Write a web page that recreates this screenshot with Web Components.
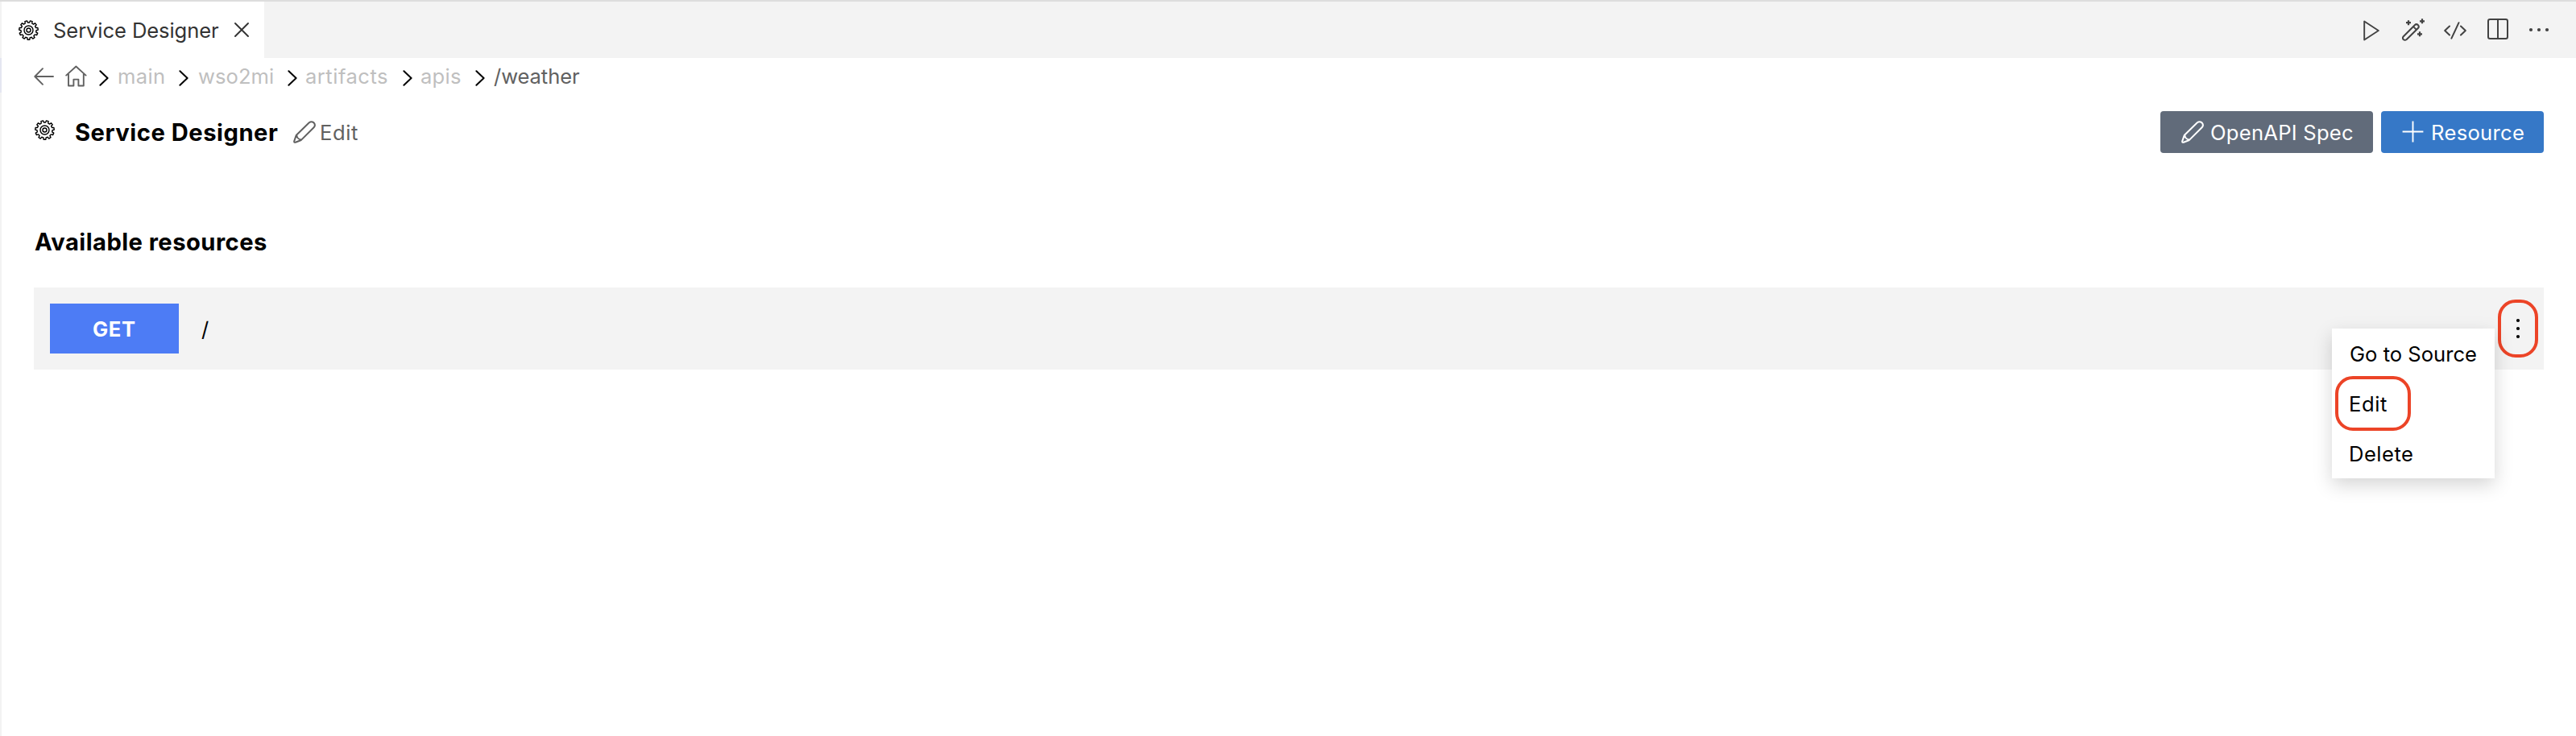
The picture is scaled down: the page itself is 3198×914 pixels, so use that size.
<!DOCTYPE html>
<html lang="en">
<head>
<meta charset="utf-8">
<title>Service Designer</title>
<style>
html,body{margin:0;height:100%;background:#fff;overflow:hidden}
body{font-family:Inter,"Liberation Sans",sans-serif}
</style>
</head>
<body>
<app-window></app-window>
<script>
// Builds the toothed outline of the gear icon.
function gearOutline(cx, cy, inner, outer, teeth) {
  const pts = [], step = 2 * Math.PI / teeth;
  for (let i = 0; i < teeth; i++) {
    const a = i * step - Math.PI / 2 + step / 2;
    for (const [k, r] of [[-.3, inner], [-.2, outer], [.2, outer], [.3, inner]])
      pts.push((cx + r * Math.cos(a + k * step)).toFixed(2) + ' ' + (cy + r * Math.sin(a + k * step)).toFixed(2));
  }
  return 'M' + pts.join('L') + 'Z';
}
// name: [width, height, stroke width, markup]
const ICONS = {
  gear: [25, 25, 1.4, `<path d="${gearOutline(12.5, 12.5, 9.5, 11.8, 11)}"/><circle cx="12.5" cy="12.5" r="5.5"/><circle cx="12.5" cy="12.5" r="2.5"/>`],
  close: [18, 18, 1.9, '<path d="M1 1L17 17M17 1L1 17"/>'],
  back: [25, 22, 1.9, '<path d="M24 11H1.5M11 1.2L1.3 11L11 20.8"/>'],
  home: [27, 27, 1.9, '<path d="M1.2 12.6L13.4 1.5L25.6 12.6M4 11V25.5H10.4V17.6H16.4V25.5H22.8V11"/>'],
  chevron: [12, 20, 2, '<path d="M1.4 1.2L10.6 10L1.4 18.8"/>'],
  pencil: [28, 28, 2, '<path d="M1.2 25.4L3.6 18.4Q3.8 17.9 4.2 17.5L19.8 2.3Q22.6 0 25.6 2.4Q28.2 5.4 25.6 8.3L10.2 23.6Q9.8 24 9.3 24.2L2.8 26.8Q.9 27.2 1.2 25.4ZM4.2 17.5Q4.8 23 10.2 23.6"/>'],
  plus: [27, 27, 1.9, '<path d="M13.5 .6V26.4M.6 13.5H26.4" stroke-linecap="butt"/>'],
  play: [20, 26, 1.9, '<path d="M1.2 1.5V24.5L18.8 13Z"/>'],
  wand: [28, 28, 2, '<path d="M1.8 22.2L16 8Q17.8 6.2 19.9 8.1Q21.7 10.2 19.9 12L5.7 26Q3.6 27.6 1.7 26Q.2 24.2 1.8 22.2ZM14.2 10.1L17.6 13.6"/><path d="M8 2.2V8.2M5 5.2H11M25 .3V6.3M22 3.3H28M22 16.3V22.3M19 19.3H25" stroke-width="2.2" stroke-linecap="butt"/>'],
  code: [28, 22, 2, '<path d="M7 5.5L1.2 11L7 16.5M21 5.5L26.8 11L21 16.5M18.5 1.2L9.4 20.6"/>'],
  split: [26, 26, 2, '<rect x="1" y="1" width="24" height="24" rx="2.3"/><path d="M13 1V25"/>'],
  more: [26, 6, 0, '<g fill="currentColor"><circle cx="3" cy="3" r="2.1"/><circle cx="13" cy="3" r="2.1"/><circle cx="23" cy="3" r="2.1"/></g>'],
  kebab: [6, 26, 0, '<g fill="currentColor"><circle cx="3" cy="3" r="2.1"/><circle cx="3" cy="13" r="2.1"/><circle cx="3" cy="23" r="2.1"/></g>']
};
customElements.define('ui-icon', class extends HTMLElement {
  connectedCallback() {
    const [w, h, sw, body] = ICONS[this.getAttribute('name')];
    this.attachShadow({mode: 'open'}).innerHTML =
      `<style>:host{display:block;flex:none;width:${w}px;height:${h}px}svg{display:block}</style>
       <svg width="${w}" height="${h}" viewBox="0 0 ${w} ${h}" fill="none" stroke="currentColor" stroke-width="${sw}" stroke-linecap="round" stroke-linejoin="round">${body}</svg>`;
  }
});
// A one-line label whose tracking is set so that its glyphs span exactly `width` pixels.
customElements.define('ui-label', class extends HTMLElement {
  connectedCallback() {
    const root = this.attachShadow({mode: 'open'});
    root.innerHTML = `<style>:host{display:block;flex:none;white-space:nowrap;line-height:32px}span{display:inline-block}</style><span><slot></slot></span>`;
    const text = this.getAttribute('text'), width = +this.getAttribute('width');
    this.textContent = text;
    const cs = getComputedStyle(this), g = document.createElement('canvas').getContext('2d');
    g.font = `${cs.fontWeight} ${cs.fontSize} ${cs.fontFamily}`;
    const m = g.measureText(text), ink = m.actualBoundingBoxRight + m.actualBoundingBoxLeft;
    this.style.width = width + 'px';
    const span = root.querySelector('span');
    span.style.marginLeft = m.actualBoundingBoxLeft + 'px';
    if (text.length > 1) span.style.letterSpacing = ((width - ink) / (text.length - 1)).toFixed(3) + 'px';
  }
});
customElements.define('ui-button', class extends HTMLElement {
  connectedCallback() {
    this.attachShadow({mode: 'open'}).innerHTML =
      `<style>:host{display:flex;box-sizing:border-box;height:52px;padding-left:26px;align-items:center;border-radius:4px;color:#fff;font-size:25.6px}</style><slot></slot>`;
  }
});
customElements.define('editor-tabs', class extends HTMLElement {
  connectedCallback() {
    this.attachShadow({mode: 'open'}).innerHTML = `<style>
      :host{display:flex;box-sizing:border-box;height:72px;border-top:2px solid #dddddd;background:#f3f3f3;justify-content:space-between}
      .tab{display:flex;align-items:center;box-sizing:border-box;margin-left:2px;width:326px;background:#fff;padding-left:21px;color:#333;font-size:25.6px}
      .tab ui-label{margin:2px 19px 0 19px}
      .gear{color:#000}
      .actions{display:flex;align-items:center;gap:27px;padding-right:33px;color:#424242}
    </style>
    <div class="tab"><ui-icon class="gear" name="gear"></ui-icon><ui-label text="Service Designer" width="205"></ui-label><ui-icon name="close"></ui-icon></div>
    <div class="actions"><ui-icon name="play" style="margin:2px 1px 0 0"></ui-icon><ui-icon name="wand" style="margin-right:-3px"></ui-icon><ui-icon name="code" style="margin-top:1px"></ui-icon><ui-icon name="split" style="margin-left:-1px;margin-top:-2px"></ui-icon><ui-icon name="more" style="margin-left:-2px"></ui-icon></div>`;
  }
});
customElements.define('bread-crumbs', class extends HTMLElement {
  connectedCallback() {
    const crumbs = [['main', 57, 12, 18], ['wso2mi', 93, 12, 18], ['artifacts', 101, 11, 19], ['apis', 49, 11, 18]];
    let html = '';
    for (const [t, w, before, after] of crumbs)
      html += `<ui-icon class="sep" name="chevron"></ui-icon><ui-label text="${t}" width="${w}" style="margin:0 ${after}px 0 ${before}px"></ui-label>`;
    this.attachShadow({mode: 'open'}).innerHTML = `<style>
      :host{display:flex;align-items:center;height:46px;font-size:25.6px;color:#bfbfbf}
      .nav{color:#616161}
      .sep{color:#000;margin-top:4px}
      .last{color:#616161;margin-left:11px}
    </style>
    <ui-icon class="nav" name="back"></ui-icon><ui-icon class="nav" name="home" style="margin:-2px 15px 0 14px"></ui-icon>${html}<ui-icon class="sep" name="chevron"></ui-icon><ui-label class="last" text="/weather" width="107"></ui-label>`;
  }
});
customElements.define('page-heading', class extends HTMLElement {
  connectedCallback() {
    this.attachShadow({mode: 'open'}).innerHTML = `<style>
      :host{display:flex;align-items:center;height:52px;font-size:25.6px}
      .title{font-size:29.2px;font-weight:700;color:#000;margin:1px 19px 0 26px}
      .edit{color:#616161}
      .grow{flex:1}
      ui-button ui-label{margin-top:1px}
      .spec{width:264px;background:#616b7a;margin-right:10px}
      .res{width:202px;background:#3678c7}
    </style>
    <ui-icon name="gear" style="color:#000;margin-top:-5px;margin-left:1px"></ui-icon>
    <ui-label class="title" text="Service Designer" width="251"></ui-label>
    <ui-icon class="edit" name="pencil"></ui-icon>
    <ui-label class="edit" text="Edit" width="45" style="margin:1px 0 0 7px"></ui-label>
    <div class="grow"></div>
    <ui-button class="spec"><ui-icon name="pencil"></ui-icon><ui-label text="OpenAPI Spec" width="176" style="margin-left:9px"></ui-label></ui-button>
    <ui-button class="res"><ui-icon name="plus" style="margin-top:-2px"></ui-icon><ui-label text="Resource" width="113" style="margin-left:11px"></ui-label></ui-button>`;
  }
});
customElements.define('context-menu', class extends HTMLElement {
  connectedCallback() {
    this.attachShadow({mode: 'open'}).innerHTML = `<style>
      :host{display:block;width:202px;height:186px;background:#fff;color:#000;font-size:25.6px;box-shadow:0 8px 22px rgba(0,0,0,.17)}
      .item{position:relative;height:62px;display:flex;align-items:center;padding:1px 0 0 23px;box-sizing:border-box}
      .ring{position:absolute;left:4px;top:-3px;width:94px;height:68px;box-sizing:border-box;border:4px solid #ec4427;border-radius:22px}
    </style>
    <div class="item"><ui-label text="Go to Source" width="156"></ui-label></div>
    <div class="item"><ui-label text="Edit" width="45"></ui-label><div class="ring"></div></div>
    <div class="item"><ui-label text="Delete" width="77"></ui-label></div>`;
  }
});
customElements.define('resource-row', class extends HTMLElement {
  connectedCallback() {
    this.attachShadow({mode: 'open'}).innerHTML = `<style>
      :host{position:relative;display:flex;align-items:center;box-sizing:border-box;height:102px;padding:0 7px 0 20px;background:#f3f3f3;font-size:25.6px}
      .method{display:flex;align-items:center;justify-content:center;width:160px;height:62px;padding-top:2px;box-sizing:border-box;background:#4d7cf5;color:#fff;font-weight:700}
      .path{color:#000;margin:2px 0 0 28px}
      .grow{flex:1}
      .kebab{display:flex;align-items:center;justify-content:center;box-sizing:border-box;width:50px;height:72px;border:4px solid #ec4427;border-radius:22px;color:#000}
      context-menu{position:absolute;right:61px;top:51px}
    </style>
    <div class="method"><ui-label text="GET" width="52"></ui-label></div>
    <ui-label class="path" text="/" width="8"></ui-label>
    <div class="grow"></div>
    <div class="kebab"><ui-icon name="kebab"></ui-icon></div>
    <context-menu></context-menu>`;
  }
});
customElements.define('app-window', class extends HTMLElement {
  connectedCallback() {
    this.attachShadow({mode: 'open'}).innerHTML = `<style>
      :host{display:flex;flex-direction:column;height:914px}
      .main{flex:1;box-sizing:border-box;border-style:solid;border-width:0 0 0 2px;border-image:linear-gradient(#e4e6f1 44px,#f3f3f3 44px) 1;padding:0 40px}
      page-heading{margin-top:20px}
      .section{font-size:29.2px;font-weight:700;margin:95px 0 40px 1px;color:#000}
    </style>
    <editor-tabs></editor-tabs>
    <div class="main">
      <bread-crumbs></bread-crumbs>
      <page-heading></page-heading>
      <ui-label class="section" text="Available resources" width="288"></ui-label>
      <resource-row></resource-row>
    </div>`;
  }
});
</script>
</body>
</html>
